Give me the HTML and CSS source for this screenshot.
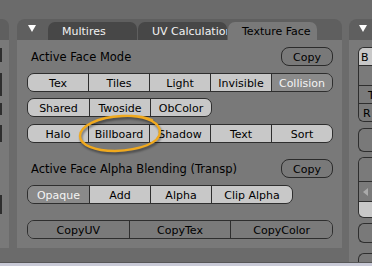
FILE: index.html
```html
<!DOCTYPE html>
<html lang="en">
  <head>
    <meta charset="UTF-8" />
    <meta name="viewport" content="width=device-width, initial-scale=1.0" />
    <title>Texture Face</title>
    <link rel="stylesheet" href="styles.css">
  </head>
  <body>
    <div class="desk">
      <!-- edge of the panel to the left -->
      <div class="panel stub">
        <div class="panel-head"></div>
        <div class="panel-body">
          <span class="edge edge-1"></span>
          <span class="edge edge-2"></span>
          <span class="edge edge-3"></span>
          <span class="edge edge-4"></span>
          <span class="edge edge-5"></span>
        </div>
      </div>

      <div class="panel main">
        <div class="panel-head">
          <span class="tri"></span>
          <span class="tab first">Multires</span>
          <span class="tab">UV Calculation</span>
          <span class="tab active">Texture Face</span>
        </div>
        <div class="panel-body">
          <div class="label-row">
            <span class="label">Active Face Mode</span>
            <span class="btn copy">Copy</span>
          </div>

          <div class="row full gap-7">
            <span class="tog">Tex</span>
            <span class="tog">Tiles</span>
            <span class="tog">Light</span>
            <span class="tog">Invisible</span>
            <span class="tog on">Collision</span>
          </div>
          <div class="row fixed gap-6">
            <span class="tog">Shared</span>
            <span class="tog">Twoside</span>
            <span class="tog">ObColor</span>
          </div>
          <div class="row full gap-7">
            <span class="tog">Halo</span>
            <span class="tog">Billboard</span>
            <span class="tog">Shadow</span>
            <span class="tog">Text</span>
            <span class="tog">Sort</span>
          </div>

          <div class="label-row gap-16">
            <span class="label">Active Face Alpha Blending (Transp)</span>
            <span class="btn copy">Copy</span>
          </div>

          <div class="row fixed gap-7">
            <span class="tog on">Opaque</span>
            <span class="tog">Add</span>
            <span class="tog">Alpha</span>
            <span class="tog wide">Clip Alpha</span>
          </div>

          <div class="row full flat gap-16">
            <span class="tog">CopyUV</span>
            <span class="tog">CopyTex</span>
            <span class="tog">CopyColor</span>
          </div>
        </div>
      </div>

      <!-- next panel, cut off by the window -->
      <div class="panel side">
        <div class="panel-head"><span class="tri"></span></div>
        <div class="panel-body">
          <div class="box box-a">
            <span class="cell lit b">B</span>
            <span class="cell tall"></span>
            <span class="cell t">T</span>
            <span class="cell r">R</span>
          </div>
          <div class="box box-b"></div>
          <div class="box box-c">
            <span class="cell c1"></span>
            <span class="cell c2"><span class="arrow"></span></span>
            <span class="cell lit c3"></span>
          </div>
          <div class="box box-d"></div>
          <div class="box box-e"></div>
        </div>
      </div>
    </div>
    <div class="status"></div>

    <!-- hand drawn mark round Billboard -->
    <svg class="mark" width="372" height="266" viewBox="0 0 372 266">
      <path d="M131 116 C148 117 160 123 160 132 C160 143 140 150 115 151 C95 151 80 145 80 136 C80 126 98 117 122 116 C135 115.5 146 117 152 120"
            fill="none" stroke="#f0a91e" stroke-width="2.4" stroke-linecap="round" />
    </svg>
  </body>
</html>
```

FILE: styles.css
```css
/* Reset */
* {
  margin: 0;
  padding: 0;
  box-sizing: border-box;
}

body {
  position: relative;
  width: 372px;
  height: 266px;
  overflow: hidden;
  display: flex;
  flex-direction: column;
  background-color: #6b6b6b;
  font-family: "DejaVu Sans", "Liberation Sans", sans-serif;
  font-size: 11px;
  color: #000;
}

.desk {
  display: flex;
  align-items: flex-start;
  height: 262px;
  padding-top: 19px;
  overflow: hidden;
}

/* Panels */
.panel {
  display: flex;
  flex-direction: column;
  flex-shrink: 0;
}

.panel-head {
  display: flex;
  align-items: flex-end;
  height: 21px;
  background-color: #5f5f5f;
}

.panel-body {
  background-color: #797979;
}

.tri {
  align-self: flex-start;
  width: 0;
  height: 0;
  margin-top: 6px;
  border-left: 4px solid transparent;
  border-right: 4px solid transparent;
  border-top: 7px solid #fff;
}

.stub {
  width: 9px;
  margin-right: 8px;
}

.stub .panel-head {
  border-top-right-radius: 7px;
}

.stub .panel-body {
  display: flex;
  flex-direction: column;
  height: 208px;
}

.edge {
  width: 2px;
  background-color: #2e2e2e;
}

.edge-1 { height: 14px; margin-top: 8px; }
.edge-2 { height: 23px; margin-top: 11px; }
.edge-3 { height: 12px; margin-top: 7px; }
.edge-4 { height: 17px; margin-top: 10px; }
.edge-5 { height: 19px; margin-top: 53px; }

.main {
  width: 325px;
}

.main .panel-head {
  padding-left: 11px;
  border-radius: 8px 8px 0 0;
}

/* Tabs */
.tab {
  width: 89px;
  height: 18px;
  margin-left: 1px;
  padding: 1px 0 0 14px;
  line-height: 18px;
  border-radius: 7px 7px 0 0;
  background-color: #474747;
  color: #f2f2f2;
  white-space: nowrap;
  overflow: hidden;
}

.tab.first {
  margin-left: 12px;
}

.tab.active {
  background-color: #797979;
  color: #000;
}

.main .panel-body {
  display: flex;
  flex-direction: column;
  align-items: flex-start;
  height: 208px;
  padding: 7px 9px 0 10px;
}

/* Labels and Copy buttons */
.label-row {
  display: flex;
  justify-content: space-between;
  align-items: flex-start;
  width: 100%;
  height: 19px;
}

.label {
  margin-top: 1px;
  padding-left: 4px;
  font-size: 11.5px;
  line-height: 19px;
}

.btn {
  height: 19px;
  padding-top: 2px;
  line-height: 15px;
  text-align: center;
  border: 1px solid #2b2b2b;
  border-radius: 8px;
}

.copy {
  width: 52px;
}

/* Button rows */
.row {
  display: flex;
  height: 19px;
  border: 1px solid #2e2e2e;
  border-radius: 7px;
  overflow: hidden;
}

.row.full {
  width: 100%;
}

.row.full .tog {
  flex: 1;
}

.row.fixed .tog {
  width: 61px;
}

.row.fixed .tog.wide {
  width: 81px;
}

.tog {
  padding-top: 2px;
  line-height: 15px;
  text-align: center;
  white-space: nowrap;
  background-color: #c8c8c8;
}

.tog + .tog {
  border-left: 1px solid #2e2e2e;
}

.tog.on {
  background-color: #8a8a8a;
  color: #f4f4f4;
}

.row.flat .tog {
  background-color: #7a7a7a;
}

.gap-6 { margin-top: 6px; }
.gap-7 { margin-top: 7px; }
.gap-16 { margin-top: 16px; }

/* Next panel */
.side {
  width: 120px;
  margin-left: 7px;
}

.side .panel-head {
  padding-left: 10px;
  border-top-left-radius: 8px;
}

.side .panel-body {
  height: 222px;
  padding: 7px 0 0 9px;
}

.box {
  display: flex;
  flex-direction: column;
  border: 1px solid #2e2e2e;
  border-right: none;
  border-radius: 6px 0 0 6px;
  overflow: hidden;
}

.cell {
  line-height: 15px;
  padding-top: 2px;
  background-color: #7a7a7a;
}

.cell + .cell {
  border-top: 1px solid #2e2e2e;
}

.cell.lit {
  background-color: #c8c8c8;
}

.box-a { height: 75px; }
.b { height: 17px; padding-left: 2px; }
.tall { height: 20px; }
.t { height: 18px; padding-left: 9px; }
.r { height: 18px; padding-left: 4px; }

.box-b { height: 24px; margin-top: 6px; }

.box-c { height: 61px; margin-top: 5px; }
.c1 { height: 23px; }
.c2 { height: 20px; display: flex; align-items: center; padding: 0 0 0 4px; }
.c3 { height: 16px; }

.arrow {
  width: 0;
  height: 0;
  border-top: 4px solid transparent;
  border-bottom: 4px solid transparent;
  border-right: 5px solid #aaaaaa;
}

.box-d { height: 20px; margin-top: 5px; }
.box-e { height: 30px; margin-top: 10px; }

/* Bottom strip */
.status {
  height: 4px;
  border-top: 1px solid #565656;
  background-color: #c9cad7;
}

/* Annotation over the buttons */
.mark {
  position: absolute;
  left: 0;
  top: 0;
  pointer-events: none;
  filter: drop-shadow(1px 2px 1px rgba(0, 0, 0, 0.45));
}
```
